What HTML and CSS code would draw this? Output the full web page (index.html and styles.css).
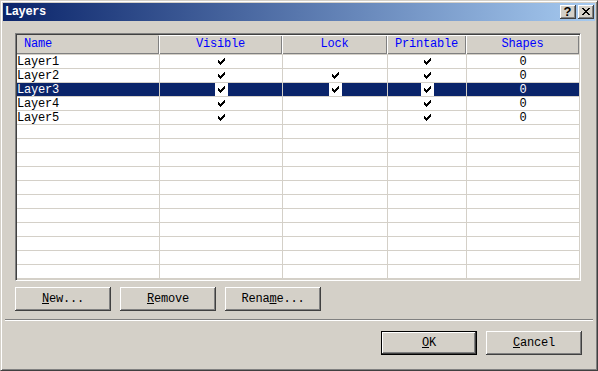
FILE: index.html
```html
<!DOCTYPE html>
<html>
<head>
<meta charset="utf-8">
<link rel="stylesheet" href="styles.css">
</head>
<body>
<div class="window">
  <div class="titlebar">
    <span class="title">Layers</span>
    <div class="tbtns">
      <span class="tbtn help">?</span>
      <span class="tbtn close"><svg width="8" height="7" viewBox="0 0 8 7"><path d="M0 0h2v1h-2zM6 0h2v1h-2zM1 1h2v1h-2zM5 1h2v1h-2zM2 2h4v1h-4zM3 3h2v1h-2zM2 4h4v1h-4zM1 5h2v1h-2zM5 5h2v1h-2zM0 6h2v1h-2zM6 6h2v1h-2z" fill="#000"/></svg></span>
    </div>
  </div>
  <div class="content">
    <div class="listbox">
      <div class="header">
        <div class="hcell left">Name</div>
        <div class="hcell">Visible</div>
        <div class="hcell">Lock</div>
        <div class="hcell">Printable</div>
        <div class="hcell">Shapes</div>
      </div>
      <div class="rows">
        <div class="row">
          <div class="cell name">Layer1</div>
          <div class="cell chk"><span class="ck"><svg class="tick" width="7" height="7" viewBox="0 0 7 7"><path d="M6 0h1v1h-1zM5 1h2v1h-2zM0 2h1v1h-1zM4 2h3v1h-3zM0 3h2v1h-2zM3 3h3v1h-3zM0 4h5v1h-5zM1 5h3v1h-3zM2 6h1v1h-1z"/></svg></span></div>
          <div class="cell chk"></div>
          <div class="cell chk"><span class="ck"><svg class="tick" width="7" height="7" viewBox="0 0 7 7"><path d="M6 0h1v1h-1zM5 1h2v1h-2zM0 2h1v1h-1zM4 2h3v1h-3zM0 3h2v1h-2zM3 3h3v1h-3zM0 4h5v1h-5zM1 5h3v1h-3zM2 6h1v1h-1z"/></svg></span></div>
          <div class="cell num">0</div>
        </div>
        <div class="row">
          <div class="cell name">Layer2</div>
          <div class="cell chk"><span class="ck"><svg class="tick" width="7" height="7" viewBox="0 0 7 7"><path d="M6 0h1v1h-1zM5 1h2v1h-2zM0 2h1v1h-1zM4 2h3v1h-3zM0 3h2v1h-2zM3 3h3v1h-3zM0 4h5v1h-5zM1 5h3v1h-3zM2 6h1v1h-1z"/></svg></span></div>
          <div class="cell chk"><span class="ck"><svg class="tick" width="7" height="7" viewBox="0 0 7 7"><path d="M6 0h1v1h-1zM5 1h2v1h-2zM0 2h1v1h-1zM4 2h3v1h-3zM0 3h2v1h-2zM3 3h3v1h-3zM0 4h5v1h-5zM1 5h3v1h-3zM2 6h1v1h-1z"/></svg></span></div>
          <div class="cell chk"><span class="ck"><svg class="tick" width="7" height="7" viewBox="0 0 7 7"><path d="M6 0h1v1h-1zM5 1h2v1h-2zM0 2h1v1h-1zM4 2h3v1h-3zM0 3h2v1h-2zM3 3h3v1h-3zM0 4h5v1h-5zM1 5h3v1h-3zM2 6h1v1h-1z"/></svg></span></div>
          <div class="cell num">0</div>
        </div>
        <div class="row selected">
          <div class="cell name">Layer3</div>
          <div class="cell chk"><span class="ck"><svg class="tick" width="7" height="7" viewBox="0 0 7 7"><path d="M6 0h1v1h-1zM5 1h2v1h-2zM0 2h1v1h-1zM4 2h3v1h-3zM0 3h2v1h-2zM3 3h3v1h-3zM0 4h5v1h-5zM1 5h3v1h-3zM2 6h1v1h-1z"/></svg></span></div>
          <div class="cell chk"><span class="ck"><svg class="tick" width="7" height="7" viewBox="0 0 7 7"><path d="M6 0h1v1h-1zM5 1h2v1h-2zM0 2h1v1h-1zM4 2h3v1h-3zM0 3h2v1h-2zM3 3h3v1h-3zM0 4h5v1h-5zM1 5h3v1h-3zM2 6h1v1h-1z"/></svg></span></div>
          <div class="cell chk"><span class="ck"><svg class="tick" width="7" height="7" viewBox="0 0 7 7"><path d="M6 0h1v1h-1zM5 1h2v1h-2zM0 2h1v1h-1zM4 2h3v1h-3zM0 3h2v1h-2zM3 3h3v1h-3zM0 4h5v1h-5zM1 5h3v1h-3zM2 6h1v1h-1z"/></svg></span></div>
          <div class="cell num">0</div>
        </div>
        <div class="row">
          <div class="cell name">Layer4</div>
          <div class="cell chk"><span class="ck"><svg class="tick" width="7" height="7" viewBox="0 0 7 7"><path d="M6 0h1v1h-1zM5 1h2v1h-2zM0 2h1v1h-1zM4 2h3v1h-3zM0 3h2v1h-2zM3 3h3v1h-3zM0 4h5v1h-5zM1 5h3v1h-3zM2 6h1v1h-1z"/></svg></span></div>
          <div class="cell chk"></div>
          <div class="cell chk"><span class="ck"><svg class="tick" width="7" height="7" viewBox="0 0 7 7"><path d="M6 0h1v1h-1zM5 1h2v1h-2zM0 2h1v1h-1zM4 2h3v1h-3zM0 3h2v1h-2zM3 3h3v1h-3zM0 4h5v1h-5zM1 5h3v1h-3zM2 6h1v1h-1z"/></svg></span></div>
          <div class="cell num">0</div>
        </div>
        <div class="row">
          <div class="cell name">Layer5</div>
          <div class="cell chk"><span class="ck"><svg class="tick" width="7" height="7" viewBox="0 0 7 7"><path d="M6 0h1v1h-1zM5 1h2v1h-2zM0 2h1v1h-1zM4 2h3v1h-3zM0 3h2v1h-2zM3 3h3v1h-3zM0 4h5v1h-5zM1 5h3v1h-3zM2 6h1v1h-1z"/></svg></span></div>
          <div class="cell chk"></div>
          <div class="cell chk"><span class="ck"><svg class="tick" width="7" height="7" viewBox="0 0 7 7"><path d="M6 0h1v1h-1zM5 1h2v1h-2zM0 2h1v1h-1zM4 2h3v1h-3zM0 3h2v1h-2zM3 3h3v1h-3zM0 4h5v1h-5zM1 5h3v1h-3zM2 6h1v1h-1z"/></svg></span></div>
          <div class="cell num">0</div>
        </div>
        <div class="row"><div class="cell"></div><div class="cell"></div><div class="cell"></div><div class="cell"></div><div class="cell"></div></div>
        <div class="row"><div class="cell"></div><div class="cell"></div><div class="cell"></div><div class="cell"></div><div class="cell"></div></div>
        <div class="row"><div class="cell"></div><div class="cell"></div><div class="cell"></div><div class="cell"></div><div class="cell"></div></div>
        <div class="row"><div class="cell"></div><div class="cell"></div><div class="cell"></div><div class="cell"></div><div class="cell"></div></div>
        <div class="row"><div class="cell"></div><div class="cell"></div><div class="cell"></div><div class="cell"></div><div class="cell"></div></div>
        <div class="row"><div class="cell"></div><div class="cell"></div><div class="cell"></div><div class="cell"></div><div class="cell"></div></div>
        <div class="row"><div class="cell"></div><div class="cell"></div><div class="cell"></div><div class="cell"></div><div class="cell"></div></div>
        <div class="row"><div class="cell"></div><div class="cell"></div><div class="cell"></div><div class="cell"></div><div class="cell"></div></div>
        <div class="row"><div class="cell"></div><div class="cell"></div><div class="cell"></div><div class="cell"></div><div class="cell"></div></div>
        <div class="row"><div class="cell"></div><div class="cell"></div><div class="cell"></div><div class="cell"></div><div class="cell"></div></div>
        <div class="row"><div class="cell"></div><div class="cell"></div><div class="cell"></div><div class="cell"></div><div class="cell"></div></div>
      </div>
    </div>
    <div class="btnrow">
      <button class="btn"><u>N</u>ew...</button>
      <button class="btn"><u>R</u>emove</button>
      <button class="btn">Rena<u>m</u>e...</button>
    </div>
    <div class="sep"></div>
    <div class="okrow">
      <button class="btn default"><u>O</u>K</button>
      <button class="btn"><u>C</u>ancel</button>
    </div>
  </div>
</div>
</body>
</html>
```

FILE: styles.css
```css
html, body {
  margin: 0;
  padding: 0;
  background: #d4d0c8;
}

body {
  font-family: "Liberation Mono", "DejaVu Sans Mono", monospace;
  font-size: 12px;
  letter-spacing: -0.2px;
}

.window {
  width: 598px;
  height: 371px;
  box-sizing: border-box;
  border: 1px solid;
  border-color: #d4d0c8 #404040 #404040 #d4d0c8;
  box-shadow: inset 1px 1px #fff, inset -1px -1px #808080;
  padding: 2px;
  background: #d4d0c8;
  display: flex;
  flex-direction: column;
}

.titlebar {
  height: 18px;
  flex: none;
  background: linear-gradient(to right, #0a246a, #a6caf0);
  display: flex;
  align-items: center;
  justify-content: space-between;
  padding: 0 1px 0 2px;
}

.title {
  color: #fff;
  font-weight: bold;
  font-size: 12px;
  letter-spacing: -0.4px;
  line-height: 18px;
}

.tbtns {
  display: flex;
  gap: 2px;
}

.tbtn {
  width: 16px;
  height: 14px;
  box-sizing: border-box;
  background: #d4d0c8;
  box-shadow: inset -1px -1px #404040, inset 1px 1px #fff, inset -2px -2px #808080;
  display: flex;
  align-items: center;
  justify-content: center;
}

.help {
  font-family: "Liberation Sans", "DejaVu Sans", sans-serif;
  font-weight: bold;
  font-size: 13px;
  line-height: 14px;
  letter-spacing: 0;
  color: #000;
  padding-bottom: 1px;
  padding-right: 1px;
}

.close svg {
  display: block;
  margin-right: 1px;
  margin-bottom: 1px;
}

.content {
  flex: 1;
  display: flex;
  flex-direction: column;
}

.listbox {
  margin: 12px 0 0 12px;
  width: 566px;
  height: 248px;
  box-sizing: border-box;
  border: 1px solid;
  border-color: #808080 #fff #fff #808080;
  box-shadow: inset 1px 1px #404040, inset -1px -1px #d4d0c8;
  padding: 1px;
  background: #fff;
}

.header,
.row {
  display: grid;
  grid-template-columns: 142px 123px 105px 79px 113px;
}

.header {
  height: 19px;
}

.hcell {
  background: #d4d0c8;
  box-shadow: inset 1px 1px #fff, inset -1px -1px #808080;
  color: #0000ff;
  text-align: center;
  line-height: 19px;
}

.hcell.left {
  text-align: left;
  padding-left: 7px;
  box-shadow: inset 0 1px #d4d0c8, inset -1px -1px #808080;
}

.rows {
  border-bottom: 1px solid #d4d0c8;
}

.row {
  height: 14px;
  box-sizing: border-box;
  border-top: 1px solid #d4d0c8;
}

.cell {
  height: 13px;
  line-height: 15px;
  color: #000;
}

.cell + .cell {
  border-left: 1px solid #d4d0c8;
}

.name {
  padding-left: 0;
}

.chk {
  display: flex;
  justify-content: center;
  align-items: center;
}

.ck {
  width: 13px;
  height: 13px;
  display: flex;
  align-items: center;
  justify-content: center;
}

.tick {
  display: block;
  fill: #000;
}

.num {
  text-align: center;
}

.selected .cell {
  background: #0a246a;
  color: #fff;
}

.selected .ck {
  background: #fff;
}

.btnrow {
  display: flex;
  gap: 9px;
  margin: 6px 0 0 12px;
}

.btn {
  width: 96px;
  height: 24px;
  box-sizing: border-box;
  border: none;
  padding: 0;
  margin: 0;
  background: #d4d0c8;
  box-shadow: inset -1px -1px #404040, inset 1px 1px #fff, inset -2px -2px #808080, inset 2px 2px #d4d0c8;
  font-family: "Liberation Mono", "DejaVu Sans Mono", monospace;
  font-size: 12px;
  letter-spacing: -0.2px;
  color: #000;
  line-height: 22px;
}

.btn.default {
  border: 1px solid #000;
  box-shadow: inset -1px -1px #404040, inset 1px 1px #fff, inset -2px -2px #808080;
}

.sep {
  margin: 8px 2px 0 2px;
  border-top: 1px solid #808080;
  border-bottom: 1px solid #fff;
  height: 0;
}

.okrow {
  display: flex;
  justify-content: flex-end;
  gap: 9px;
  margin-top: 10px;
  padding-right: 13px;
}
```
